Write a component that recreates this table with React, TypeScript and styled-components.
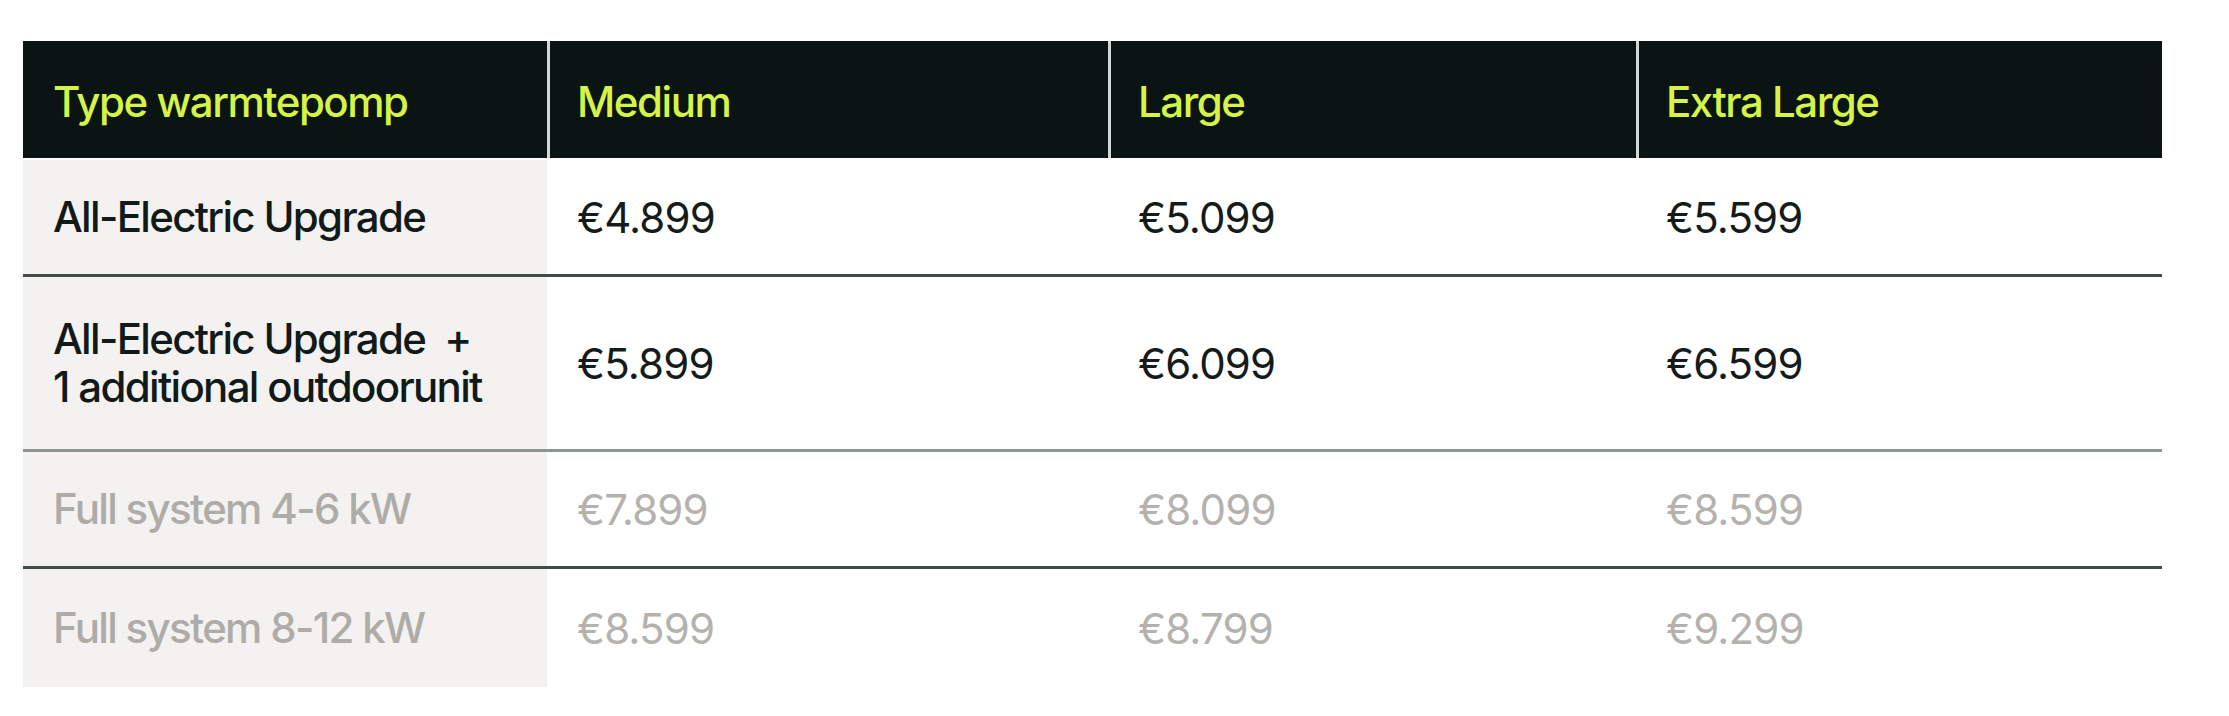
import React from 'react';
import styled, { createGlobalStyle } from 'styled-components';

type Row = {
  label: string[];
  prices: string[];
  muted?: boolean;
  height: number;
  line?: 'dark' | 'light';
};

const rows: Row[] = [
  { label: ['All-Electric Upgrade'], prices: ['€4.899', '€5.099', '€5.599'], height: 114, line: 'dark' },
  {
    label: ['All-Electric Upgrade  +', '1 additional outdoorunit'],
    prices: ['€5.899', '€6.099', '€6.599'],
    height: 172,
    line: 'light',
  },
  { label: ['Full system 4-6 kW'], prices: ['€7.899', '€8.099', '€8.599'], muted: true, height: 114, line: 'dark' },
  { label: ['Full system 8-12 kW'], prices: ['€8.599', '€8.799', '€9.299'], muted: true, height: 118 },
];

const headers = ['Type warmtepomp', 'Medium', 'Large', 'Extra Large'];

const GlobalStyle = createGlobalStyle`
  body {
    margin: 0;
    background: #ffffff;
    font-family: Inter, "Liberation Sans", sans-serif;
  }
`;

const Page = styled.div`
  padding: 41px 0 0 23px;
`;

const Table = styled.div`
  width: 2139px;
  display: flex;
  flex-direction: column;
`;

const Grid = styled.div<{ $height: number; $line?: 'dark' | 'light' }>`
  display: grid;
  grid-template-columns: 524px 561px 528px 1fr;
  height: ${(p) => p.$height}px;
  border-bottom: ${(p) =>
    p.$line === 'dark' ? '3px solid #414b48' : p.$line === 'light' ? '3px solid #8e9491' : 'none'};
`;

const HeadCell = styled.div<{ $divider?: boolean }>`
  display: flex;
  align-items: center;
  background: #0a1413;
  color: #d6f446;
  font-size: 42px;
  font-weight: 500;
  letter-spacing: -0.035em;
  padding-left: ${(p) => (p.$divider ? 27 : 30)}px;
  padding-top: 4px;
  border-left: ${(p) => (p.$divider ? '3px solid #d3d6d5' : 'none')};
`;

const HeadGap = styled.div`
  height: 2px;
  background: #ffffff;
`;

const LabelCell = styled.div<{ $muted?: boolean }>`
  display: flex;
  flex-direction: column;
  justify-content: center;
  background: #f3f2f0;
  padding-left: 30px;
  font-size: 42px;
  font-weight: 500;
  line-height: 48px;
  letter-spacing: -0.04em;
  white-space: pre;
  color: ${(p) => (p.$muted ? '#aeaca8' : '#121a19')};
`;

const PriceCell = styled.div<{ $muted?: boolean }>`
  display: flex;
  align-items: center;
  padding-left: 30px;
  font-size: 42px;
  font-weight: 400;
  letter-spacing: -0.02em;
  color: ${(p) => (p.$muted ? '#b4b2ae' : '#141b1a')};
`;

export default function App() {
  return (
    <Page>
      <GlobalStyle />
      <Table>
        <Grid $height={117}>
          {headers.map((h, i) => (
            <HeadCell key={h} $divider={i > 0}>
              {h}
            </HeadCell>
          ))}
        </Grid>
        <HeadGap />
        {rows.map((r) => (
          <Grid key={r.label.join(' ')} $height={r.height} $line={r.line}>
            <LabelCell $muted={r.muted}>
              {r.label.map((l) => (
                <span key={l}>{l}</span>
              ))}
            </LabelCell>
            {r.prices.map((p, i) => (
              <PriceCell key={i} $muted={r.muted}>
                {p}
              </PriceCell>
            ))}
          </Grid>
        ))}
      </Table>
    </Page>
  );
}
